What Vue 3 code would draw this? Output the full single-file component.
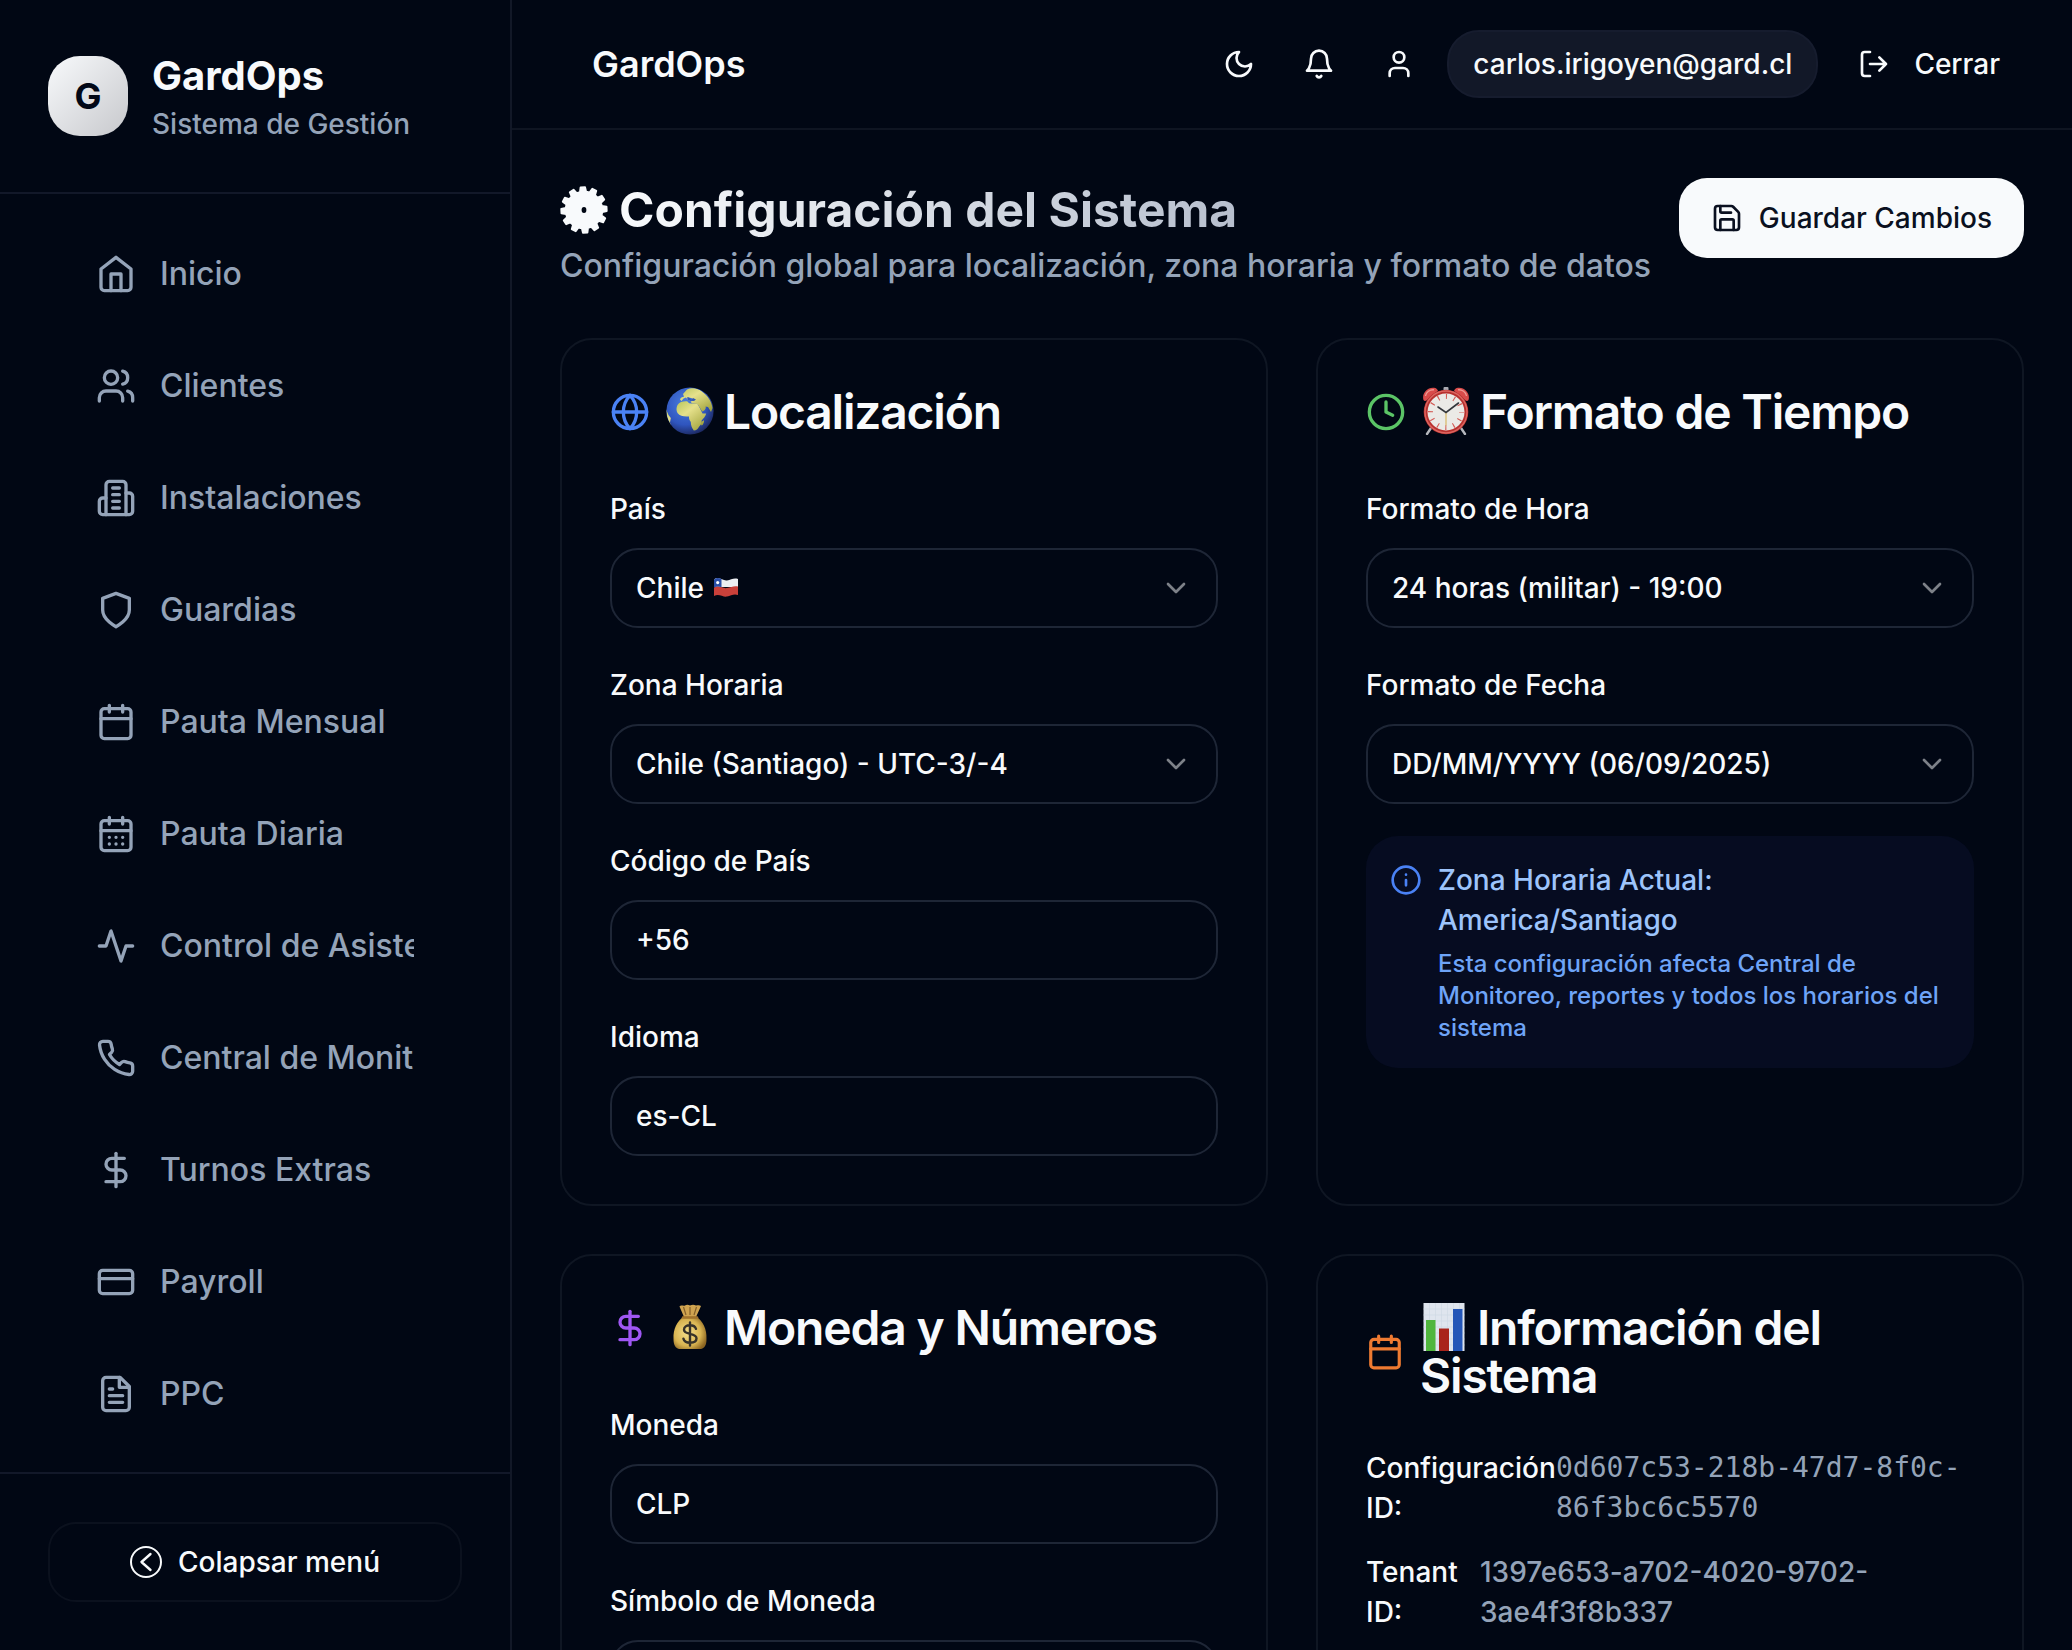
<script setup>
const icons = {
  home: '<path d="m3 9 9-7 9 7v11a2 2 0 0 1-2 2H5a2 2 0 0 1-2-2z"/><path d="M9 22V12h6v10"/>',
  users: '<path d="M16 21v-2a4 4 0 0 0-4-4H6a4 4 0 0 0-4 4v2"/><circle cx="9" cy="7" r="4"/><path d="M22 21v-2a4 4 0 0 0-3-3.87"/><path d="M16 3.13a4 4 0 0 1 0 7.75"/>',
  building: '<path d="M6 22V4a2 2 0 0 1 2-2h8a2 2 0 0 1 2 2v18Z"/><path d="M6 12H4a2 2 0 0 0-2 2v6a2 2 0 0 0 2 2h2"/><path d="M18 9h2a2 2 0 0 1 2 2v9a2 2 0 0 1-2 2h-2"/><path d="M10 6h4M10 10h4M10 14h4M10 18h4"/>',
  shield: '<path d="M12 22s8-4 8-10V5l-8-3-8 3v7c0 6 8 10 8 10"/>',
  calendar: '<rect x="3" y="4" width="18" height="18" rx="2"/><path d="M16 2v4M8 2v4M3 10h18"/>',
  calendarDays: '<rect x="3" y="4" width="18" height="18" rx="2"/><path d="M16 2v4M8 2v4M3 10h18M8 14h.01M12 14h.01M16 14h.01M8 18h.01M12 18h.01M16 18h.01"/>',
  activity: '<path d="M22 12h-4l-3 9L9 3l-3 9H2"/>',
  phone: '<path d="M22 16.92v3a2 2 0 0 1-2.18 2 19.79 19.79 0 0 1-8.63-3.07 19.5 19.5 0 0 1-6-6 19.79 19.79 0 0 1-3.07-8.67A2 2 0 0 1 4.11 2h3a2 2 0 0 1 2 1.72 12.84 12.84 0 0 0 .7 2.81 2 2 0 0 1-.45 2.11L8.09 9.91a16 16 0 0 0 6 6l1.27-1.27a2 2 0 0 1 2.11-.45 12.84 12.84 0 0 0 2.81.7A2 2 0 0 1 22 16.92z"/>',
  dollar: '<path d="M12 2v20"/><path d="M17 5H9.5a3.5 3.5 0 0 0 0 7h5a3.5 3.5 0 0 1 0 7H6"/>',
  card: '<rect x="2" y="5" width="20" height="14" rx="2"/><path d="M2 10h20"/>',
  file: '<path d="M14.5 2H6a2 2 0 0 0-2 2v16a2 2 0 0 0 2 2h12a2 2 0 0 0 2-2V7.5L14.5 2z"/><path d="M14 2v6h6M10 9H8M16 13H8M16 17H8"/>',
  moon: '<path d="M12 3a6 6 0 0 0 9 9 9 9 0 1 1-9-9Z"/>',
  bell: '<path d="M6 8a6 6 0 0 1 12 0c0 7 3 9 3 9H3s3-2 3-9"/><path d="M10.3 21a1.94 1.94 0 0 0 3.4 0"/>',
  user: '<path d="M19 21v-2a4 4 0 0 0-4-4H9a4 4 0 0 0-4 4v2"/><circle cx="12" cy="7" r="4"/>',
  logout: '<path d="M9 21H5a2 2 0 0 1-2-2V5a2 2 0 0 1 2-2h4"/><path d="m16 17 5-5-5-5M21 12H9"/>',
  save: '<path d="M15.2 3a2 2 0 0 1 1.4.6l3.8 3.8a2 2 0 0 1 .6 1.4V19a2 2 0 0 1-2 2H5a2 2 0 0 1-2-2V5a2 2 0 0 1 2-2z"/><path d="M17 21v-7a1 1 0 0 0-1-1H8a1 1 0 0 0-1 1v7M7 3v4a1 1 0 0 0 1 1h7"/>',
  globe: '<circle cx="12" cy="12" r="10"/><path d="M12 2a14.5 14.5 0 0 0 0 20 14.5 14.5 0 0 0 0-20M2 12h20"/>',
  clock: '<circle cx="12" cy="12" r="10"/><path d="M12 6v6l4 2"/>',
  info: '<circle cx="12" cy="12" r="10"/><path d="M12 16v-4M12 8h.01"/>',
  chevron: '<path d="m6 9 6 6 6-6"/>',
}

const nav = [
  ['home', 'Inicio'],
  ['users', 'Clientes'],
  ['building', 'Instalaciones'],
  ['shield', 'Guardias'],
  ['calendar', 'Pauta Mensual'],
  ['calendarDays', 'Pauta Diaria'],
  ['activity', 'Control de Asistencia'],
  ['phone', 'Central de Monitoreo'],
  ['dollar', 'Turnos Extras'],
  ['card', 'Payroll'],
  ['file', 'PPC'],
]

// Gear outline: twelve teeth round a solid body
const gear = (() => {
  const pts = []
  for (let i = 0; i < 12; i++) {
    const a = (i * 30 - 93) * Math.PI / 180
    for (const [r, d] of [[18.4, -0.17], [22.8, -0.1], [22.8, 0.1], [18.4, 0.17]]) {
      pts.push(`${(24 + r * Math.cos(a + d)).toFixed(2)},${(24 + r * Math.sin(a + d)).toFixed(2)}`)
    }
  }
  return pts.join(' ')
})()
</script>

<template>
  <div class="app">
    <aside class="sidebar">
      <div class="brand">
        <div class="logo">G</div>
        <div class="brand-text">
          <div class="brand-name">GardOps</div>
          <div class="brand-sub">Sistema de Gestión</div>
        </div>
      </div>
      <nav class="nav">
        <a v-for="[icon, label] in nav" :key="label" class="nav-item">
          <svg class="icon i40" viewBox="0 0 24 24" v-html="icons[icon]" />
          <span class="nav-label">{{ label }}</span>
        </a>
      </nav>
      <div class="side-foot">
        <button class="collapse">
          <svg class="collapse-icon" viewBox="0 0 32 32"><circle cx="16" cy="16" r="15" stroke-width="2" /><path d="m20.500 8-9 8 9 8" stroke-width="2.400" /></svg>
          <span>Colapsar menú</span>
        </button>
      </div>
    </aside>

    <div class="main">
      <header class="topbar">
        <div class="top-title">GardOps</div>
        <div class="actions">
          <span class="icon-btn"><svg class="icon i32" viewBox="0 0 24 24" v-html="icons.moon" /></span>
          <span class="icon-btn"><svg class="icon i32" viewBox="0 0 24 24" v-html="icons.bell" /></span>
          <span class="icon-btn"><svg class="icon i32" viewBox="0 0 24 24" v-html="icons.user" /></span>
          <span class="email">carlos.irigoyen@gard.cl</span>
          <span class="logout"><svg class="icon i32" viewBox="0 0 24 24" v-html="icons.logout" />Cerrar</span>
        </div>
      </header>

      <div class="content">
        <div class="page-head">
          <div>
            <h1 class="page-title">
              <svg class="gear" viewBox="0 0 48 48"><path fill="#f8fafc" stroke="#f8fafc" stroke-width="1.8" stroke-linejoin="round" :d="'M' + gear + 'Z'" /><ellipse cx="24" cy="24" rx="2.4" ry="3" fill="#010714" /></svg>
              <span class="title-text">Configuración del Sistema</span>
            </h1>
            <p class="page-sub">Configuración global para localización, zona horaria y formato de datos</p>
          </div>
          <button class="save"><svg class="icon i32" viewBox="0 0 24 24" v-html="icons.save" />Guardar Cambios</button>
        </div>

        <div class="grid">
          <section class="card">
            <h3 class="card-title">
              <svg class="icon i40 blue" viewBox="0 0 24 24" v-html="icons.globe" />
              <span class="heading">
                <svg class="emoji" viewBox="0 0 48 48">
                  <defs>
                    <radialGradient id="sea" cx=".4" cy=".35" r=".68"><stop offset="0" stop-color="#4a7fe0" /><stop offset=".65" stop-color="#2f55be" /><stop offset="1" stop-color="#1c2860" /></radialGradient>
                    <linearGradient id="land" x1="0" y1="0" x2=".8" y2="1"><stop offset="0" stop-color="#b9c65c" /><stop offset=".4" stop-color="#e6e18c" /><stop offset="1" stop-color="#a3a53f" /></linearGradient>
                    <clipPath id="ball"><circle cx="24" cy="24" r="23.4" /></clipPath>
                  </defs>
                  <circle cx="24" cy="24" r="23.6" fill="url(#sea)" />
                  <g clip-path="url(#ball)" fill="url(#land)">
                    <path d="M11.500 18c2-3 6-4 10-3.600l1.500 1.800c3 .5 6 .3 8.500.8l2 3.500 3 6h3.700c-.6 3-3 5-4.700 7.200.6 2.500-1 4.500-2.500 6-1 2.300-2.700 3.800-5.200 3.800-2-2.500-3-5.500-3-8.500-1.500-2-2-4-1.800-5.600-4.500.5-9-.2-11.500-3.400-1.500-2.500-1.200-5.500 0-8Z" />
                    <path d="M14 12.500c.5-2 2-2.500 4-2.700L17 7l4-4.500c4-2 11-2 15.500 2.500 5 3.500 9 9 10 16l-1.500 4-3-5-2.500-.5c1 2-1 4.500-3.300 5l-4.700-7.500-5.500-.5-1.500-2 3-1-2-2.500-3.500-.5 2 3-1 .5-3-3.500-2.500 1-2 2.500Z" />
                    <path d="M35.500 34.500c1.500-.5 2-1 2.500-1.500.3 2-.8 5-2.300 5.500-1-.7-.8-2.500-.2-4ZM0 22l2.500 6 2.300 3-.8 4.500L5 39l-5-5Z" />
                  </g>
                  <path d="M21 10.500c2-.6 3 .5 4 2.500l2-2 3 1.500-2 1.500-6-.5Z" fill="#3158b5" />
                </svg>Localización</span>
            </h3>
            <div class="fields">
              <div class="field">
                <label>País</label>
                <div class="control">
                  <span>Chile
                    <svg class="flag" viewBox="0 0 26 26"><path d="M1 5.500c5-4 9 2 13 1 4-.8 7-3 11-1.500v8H1Z" fill="#eceef2" /><path d="M1 13.500c5-3.500 9 1.500 13 .5 4-.8 7-2.500 11-1.500v8.500c-4-1.500-7 .5-11 1.500-4 1-8-3.500-13-.5Z" fill="#c9403a" /><path d="M1 5.500c3-2.200 5-1.600 7.500-.5v8.200C6 12.500 4 12 1 13.500Z" fill="#2b4fa8" /><circle cx="4.700" cy="8.600" r="1.600" fill="#fff" /></svg>
                  </span>
                  <svg class="icon i32 chev" viewBox="0 0 24 24" v-html="icons.chevron" />
                </div>
              </div>
              <div class="field">
                <label>Zona Horaria</label>
                <div class="control"><span>Chile (Santiago) - UTC-3/-4</span><svg class="icon i32 chev" viewBox="0 0 24 24" v-html="icons.chevron" /></div>
              </div>
              <div class="field"><label>Código de País</label><div class="control">+56</div></div>
              <div class="field"><label>Idioma</label><div class="control">es-CL</div></div>
            </div>
          </section>

          <section class="card">
            <h3 class="card-title">
              <svg class="icon i40 green" viewBox="0 0 24 24" v-html="icons.clock" />
              <span class="heading">
                <svg class="emoji" viewBox="0 0 48 48">
                  <path d="m9 41-4 6M39 41l4 6" stroke="#b5b7bd" stroke-width="2.400" stroke-linecap="round" />
                  <rect x="21.500" y="0" width="5" height="4" rx="1" fill="#a9abb3" />
                  <path d="M1.500 13C-.5 7 5 0 12 .8c2 .2 3.500 1.500 4 3L4.500 13.500c-1 .8-2.500.5-3-.5Z" fill="#d94b4a" />
                  <path d="M46.500 13C48.500 7 43 0 36 .8c-2 .2-3.500 1.500-4 3l11.500 9.700c1 .8 2.500.5 3-.5Z" fill="#d94b4a" />
                  <path d="M3.500 9C4 5 8 2.500 12 2.800M44.500 9C44 5 40 2.500 36 2.800" stroke="#ee9a94" stroke-width="1.300" fill="none" />
                  <circle cx="24" cy="25" r="22.300" fill="#b8312f" />
                  <circle cx="24" cy="25" r="21" fill="none" stroke="#dc6660" stroke-width="1.400" />
                  <circle cx="24" cy="25" r="18.500" fill="#ebeae6" />
                  <circle cx="24" cy="25" r="15.500" fill="none" stroke="#d35c56" stroke-width="5" stroke-dasharray="1.100 7.016" stroke-dashoffset=".55" />
                  <path d="M24 25v13.500" stroke="#d8b865" stroke-width="1.200" />
                  <path d="m16 20 8 5.500L36.500 16" fill="none" stroke="#33363b" stroke-width="1.600" stroke-linecap="round" />
                </svg>Formato de Tiempo</span>
            </h3>
            <div class="fields">
              <div class="field">
                <label>Formato de Hora</label>
                <div class="control"><span>24 horas (militar) - 19:00</span><svg class="icon i32 chev" viewBox="0 0 24 24" v-html="icons.chevron" /></div>
              </div>
              <div class="field">
                <label>Formato de Fecha</label>
                <div class="control"><span>DD/MM/YYYY (06/09/2025)</span><svg class="icon i32 chev" viewBox="0 0 24 24" v-html="icons.chevron" /></div>
              </div>
              <div class="notice">
                <svg class="icon i32 notice-icon" viewBox="0 0 24 24" v-html="icons.info" />
                <div>
                  <p class="notice-title">Zona Horaria Actual:<br>America/Santiago</p>
                  <p class="notice-text">Esta configuración afecta Central de<br>Monitoreo, reportes y todos los horarios del<br>sistema</p>
                </div>
              </div>
            </div>
          </section>

          <section class="card">
            <h3 class="card-title">
              <svg class="icon i40 purple" viewBox="0 0 24 24" v-html="icons.dollar" />
              <span class="heading">
                <svg class="emoji" viewBox="0 0 48 48">
                  <defs>
                    <radialGradient id="bag" cx=".42" cy=".5" r=".62"><stop offset="0" stop-color="#f5df8a" /><stop offset=".65" stop-color="#d9b451" /><stop offset="1" stop-color="#8d6622" /></radialGradient>
                  </defs>
                  <path d="M18 14 13.500 3.500c1.500-2 4-.2 5.500-1 2-1.500 3.500-.6 5 0 2.500-1 4-.8 6 0 2-.3 3.500-.8 5 .5L30 14Z" fill="#d0a450" />
                  <path d="m20 12-2.500-8M24 12V4M28 12l2.500-8" stroke="#85602a" stroke-width="1.200" />
                  <path d="M18 13.500h12C37 18 41 26 40.500 36c0 6-2 9.500-6 10h-21c-4-.5-6-4-6-10C7 26 11 18 18 13.500Z" fill="url(#bag)" />
                  <path d="M17 14.500h14" stroke="#a1732d" stroke-width="2.500" stroke-linecap="round" />
                  <path d="M24 19.500v23M30 25.800c-.8-2.300-3-3.500-6-3.500-3.500 0-6 1.700-6 4.400 0 5.600 12.500 2.600 12.500 8.600 0 2.800-2.500 4.500-6.400 4.500-3.600 0-6-1.500-6.700-4.200" fill="none" stroke="#373229" stroke-width="2.400" stroke-linecap="round" />
                </svg>Moneda y Números</span>
            </h3>
            <div class="fields">
              <div class="field"><label>Moneda</label><div class="control">CLP</div></div>
              <div class="field"><label>Símbolo de Moneda</label><div class="control"></div></div>
            </div>
          </section>

          <section class="card">
            <h3 class="card-title">
              <svg class="icon orange" viewBox="0 0 24 24" v-html="icons.calendar" />
              <span class="heading">
                <svg class="emoji chart" viewBox="0 0 48 48">
                  <path d="M3.500 0h41v48h-41Z" fill="#dfe5ee" />
                  <path d="M3.500 6h41M3.500 12h41M3.500 18h41M3.500 24h41M3.500 30h41M3.500 36h41M3.500 42h41M9.500 0v48M15.500 0v48M21.500 0v48M27.500 0v48M33.500 0v48M39.500 0v48" stroke="#ccd7e3" stroke-width=".6" />
                  <path d="M6 17h9.500v31H6Z" fill="#50b63d" /><path d="M19 25.500h10V48H19Z" fill="#a9241b" /><path d="M33 6h9.500v42H33Z" fill="#2456b8" />
                </svg>Información del<br>Sistema</span>
            </h3>
            <div class="rows">
              <div class="row"><span class="key key-config">Configuración ID:</span><span class="val mono">0d607c53-218b-47d7-8f0c-<br>86f3bc6c5570</span></div>
              <div class="row"><span class="key key-tenant">Tenant ID:</span><span class="val">1397e653-a702-4020-9702-<br>3ae4f3f8b337</span></div>
            </div>
          </section>
        </div>
      </div>
    </div>
  </div>
</template>

<style>
body { background: #010714; }
</style>

<style scoped>
* { box-sizing: border-box; margin: 0; padding: 0; }
.app {
  display: flex; width: 2072px; height: 1650px; overflow: hidden;
  background: #010714; color: #f8fafc;
  font-family: Inter, "Liberation Sans", sans-serif; font-size: 28px; font-weight: 500; line-height: 40px;
}
button { font: inherit; color: inherit; background: none; border: 0; }
.icon { flex: none; fill: none; stroke: currentColor; stroke-width: 2; stroke-linecap: round; stroke-linejoin: round; }
.i40 { width: 40px; height: 40px; }
.i32 { width: 32px; height: 32px; }

.sidebar { flex: none; width: 512px; display: flex; flex-direction: column; border-right: 2px solid #121827; background: #010714; }
.brand { height: 194px; flex: none; display: flex; align-items: center; gap: 24px; padding-left: 48px; border-bottom: 2px solid #121829; }
.logo {
  width: 80px; height: 80px; border-radius: 32px; background: linear-gradient(135deg, #f8fafc, #c7c8cc);
  color: #020817; display: flex; align-items: center; justify-content: center; font-size: 36px; font-weight: 700;
}
.brand-name { font-size: 40px; line-height: 56px; font-weight: 700; }
.brand-sub { color: #94a3b8; font-weight: 500; }
.nav { flex: 1; min-height: 0; overflow: hidden; padding: 24px 48px; }
.nav-item { height: 112px; display: flex; align-items: center; gap: 24px; padding: 0 48px; color: #94a3b8; font-size: 32px; }
.nav-label { overflow: hidden; white-space: nowrap; line-height: 48px; }
.side-foot { flex: none; height: 178px; padding: 48px; border-top: 2px solid #121829; }
.collapse { width: 414px; height: 80px; border: 2px solid #0b111e; border-radius: 28px; display: flex; align-items: center; justify-content: center; gap: 16px; }
.collapse-icon { width: 32px; height: 32px; fill: none; stroke: currentColor; stroke-linecap: round; stroke-linejoin: round; }

.main { flex: 1; min-width: 0; }
.topbar { height: 130px; border-bottom: 2px solid #0f1522; display: flex; align-items: center; justify-content: space-between; padding: 0 72px 0 80px; }
.top-title { font-size: 36px; font-weight: 600; }
.actions { display: flex; align-items: center; }
.icon-btn { width: 80px; display: flex; justify-content: center; }
.email { height: 68px; padding: 0 24px; margin-left: 8px; border: 2px solid #161c2e; border-radius: 32px; background: #121828; display: flex; align-items: center; }
.logout { display: flex; align-items: center; gap: 24px; margin-left: 40px; }

.content { padding: 48px; }
.page-head { display: flex; justify-content: space-between; align-items: flex-start; height: 160px; }
.page-title { display: flex; align-items: center; gap: 11px; height: 64px; font-size: 48px; line-height: 64px; font-weight: 700; }
.gear { width: 48px; height: 48px; }
.title-text { background: linear-gradient(90deg, #f8fafc, #b7bfce); -webkit-background-clip: text; background-clip: text; color: transparent; }
.page-sub { font-size: 32px; line-height: 48px; font-weight: 500; color: #94a3b8; white-space: nowrap; }
.save { flex: none; height: 80px; padding: 0 32px; border-radius: 28px; background: #f8fafc; color: #0a1020; display: flex; align-items: center; gap: 16px; }

.grid { display: grid; grid-template-columns: 708px 708px; gap: 48px; }
.card { border: 2px solid #0f1623; border-radius: 32px; padding: 48px; }
.card-title { display: flex; align-items: center; gap: 16px; margin-bottom: 48px; font-size: 48px; line-height: 48px; font-weight: 600; letter-spacing: -0.025em; }
.heading { white-space: nowrap; }
.emoji { width: 48px; height: 48px; margin: -12px 10px -12px 0; vertical-align: 6px; }
.emoji.chart { margin-right: 9px; }
.blue { color: #4a82f5; }
.green { color: #5bc466; }
.purple { color: #9f57f3; }
.orange { width: 38px; height: 38px; color: #ee7a31; }

.fields { display: flex; flex-direction: column; gap: 32px; }
.field { display: flex; flex-direction: column; gap: 15px; }
.field label { line-height: 48px; padding-top: 1px; }
.control { height: 80px; border: 2px solid #1e2636; border-radius: 28px; padding: 0 24px; display: flex; align-items: center; justify-content: space-between; }
.flag { width: 26px; height: 26px; margin: 0 0 0 2px; vertical-align: -2px; }
.chev { opacity: .5; }
.notice { display: flex; gap: 16px; padding: 24px; border-radius: 32px; background: #060c21; color: #6ea4f7; }
.notice-icon { margin-top: 4px; color: #4a82f5; }
.notice-title { color: #9dc4fb; }
.notice-text { margin-top: 8px; font-size: 24px; line-height: 32px; }

.rows { display: flex; flex-direction: column; gap: 24px; }
.row { display: flex; }
.key-config { width: 190px; }
.key-tenant { width: 114px; padding-right: 16px; }
.val { color: #94a3b8; white-space: nowrap; }
.mono { font-family: "DejaVu Sans Mono", monospace; font-weight: 400; }
</style>
